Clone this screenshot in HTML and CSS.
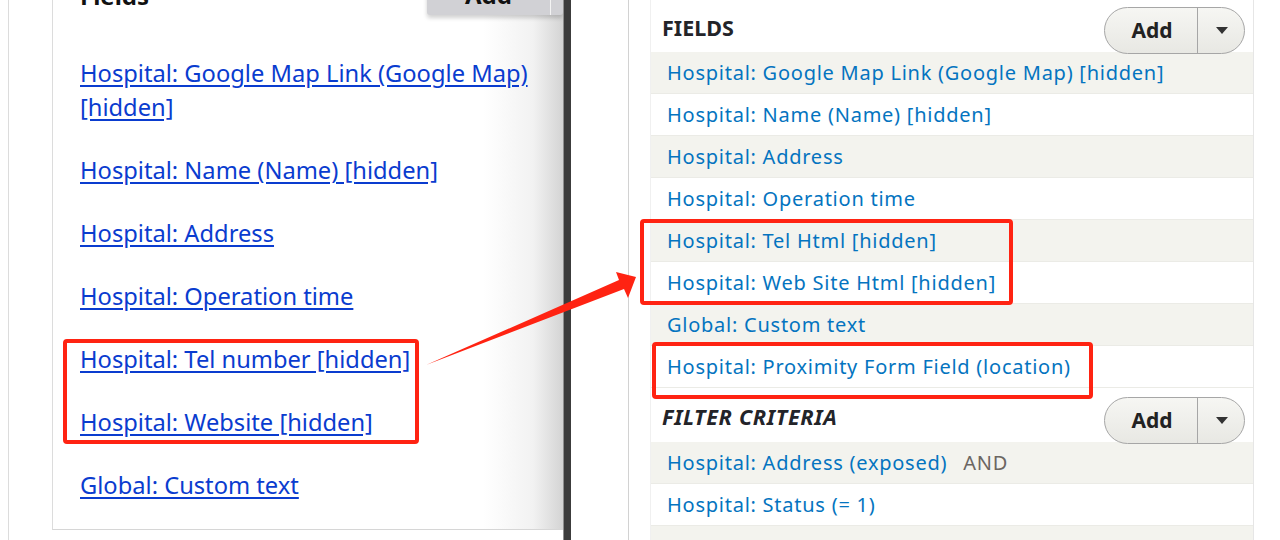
FILE: index.html
```html
<!DOCTYPE html>
<html>
<head>
<meta charset="utf-8">
<link rel="stylesheet" href="styles.css">
</head>
<body>
<div class="page">
  <div class="shot-left">
    <div class="outer">
      <div class="card">
        <div class="card-head">
          <span class="card-title">Fields</span>
          <span class="grey-btn"><span class="grey-btn-label">Add</span><span class="grey-btn-toggle"></span></span>
        </div>
        <ul class="link-list">
          <li><a href="#">Hospital: Google Map Link (Google Map) [hidden]</a></li>
          <li><a href="#">Hospital: Name (Name) [hidden]</a></li>
          <li><a href="#">Hospital: Address</a></li>
          <li><a href="#">Hospital: Operation time</a></li>
          <li><a href="#">Hospital: Tel number [hidden]</a></li>
          <li><a href="#">Hospital: Website [hidden]</a></li>
          <li><a href="#">Global: Custom text</a></li>
        </ul>
      </div>
    </div>
  </div>
  <div class="splitter"></div>
  <div class="shot-right">
    <div class="gutter"></div>
    <div class="panel">
      <div class="section-head">
        <h2 class="section-title">FIELDS</h2>
        <div class="drop-btn"><span class="drop-main">Add</span><span class="drop-toggle"><span class="caret"></span></span></div>
      </div>
      <div class="rows">
        <div class="row"><a href="#">Hospital: Google Map Link (Google Map) [hidden]</a></div>
        <div class="row"><a href="#">Hospital: Name (Name) [hidden]</a></div>
        <div class="row"><a href="#">Hospital: Address</a></div>
        <div class="row"><a href="#">Hospital: Operation time</a></div>
        <div class="row"><a href="#">Hospital: Tel Html [hidden]</a></div>
        <div class="row"><a href="#">Hospital: Web Site Html [hidden]</a></div>
        <div class="row"><a href="#">Global: Custom text</a></div>
        <div class="row"><a href="#">Hospital: Proximity Form Field (location)</a></div>
      </div>
      <div class="section-head filter-head">
        <h2 class="section-title italic">FILTER CRITERIA</h2>
        <div class="drop-btn"><span class="drop-main">Add</span><span class="drop-toggle"><span class="caret"></span></span></div>
      </div>
      <div class="rows">
        <div class="row"><a href="#">Hospital: Address (exposed)</a><span class="op">AND</span></div>
        <div class="row"><a href="#">Hospital: Status (= 1)</a></div>
        <div class="row"><span class="op first">AND</span></div>
      </div>
    </div>
  </div>
</div>

<div class="mark mark-left"></div>
<div class="mark mark-right-a"></div>
<div class="mark mark-right-b"></div>
<svg class="arrow" width="1280" height="540" viewBox="0 0 1280 540" xmlns="http://www.w3.org/2000/svg">
  <polygon points="426,365 619,280 616,272 636,277 628,298 624,289" fill="#ff2312"/>
</svg>
</body>
</html>
```
FILE: styles.css
```css
html, body {
  margin: 0;
  padding: 0;
  background: #fff;
  height: 540px;
  overflow: hidden;
}
body {
  position: relative;
  font-family: "Noto Sans", "Liberation Sans", sans-serif;
}
.page {
  display: flex;
  height: 540px;
}

/* left screenshot */
.shot-left {
  width: 555px;
  padding-left: 8px;
  flex: none;
}
.outer {
  display: flow-root;
  border-left: 1px solid #dcdcdc;
  height: 100%;
  padding-left: 43px;
}
.card {
  margin-top: -30px;
  border-left: 1px solid #dcdcdc;
  border-bottom: 1px solid #d6d6d6;
  height: 560px;
  background: linear-gradient(to right, #ffffff 0, #ffffff 430px, #f2f2f2 480px, #d3d3d3 511px);
  padding-left: 27px;
  box-sizing: border-box;
}
.card-head {
  height: 45px;
  display: flex;
  align-items: flex-end;
  justify-content: space-between;
}
.card-title {
  font-weight: bold;
  font-size: 24px;
  line-height: 30px;
  color: #111;
  margin-bottom: 4px;
}
.grey-btn {
  display: flex;
  width: 136px;
  height: 45px;
  background: #d1d1d5;
  border-radius: 0 0 3px 3px;
  box-shadow: 0 3px 4px rgba(0,0,0,0.18);
}
.grey-btn-label {
  width: 124px;
  font-weight: bold;
  font-size: 24px;
  line-height: 30px;
  text-align: center;
  color: #111;
  padding-top: 10px;
  border-right: 1px solid #f4f4f4;
  box-sizing: border-box;
}
.link-list {
  list-style: none;
  margin: 0;
  padding: 41px 30px 0 0;
  display: flex;
  flex-direction: column;
  gap: 29px;
  font-size: 23.7px;
  line-height: 34px;
}
.link-list a {
  color: #0a3ccf;
  text-decoration: underline;
  text-underline-offset: 3px;
}

/* splitter */
.splitter {
  width: 8px;
  flex: none;
  background: #3c3c3c;
  border-left: 1px solid #8f8f8f;
  box-sizing: border-box;
}

/* right screenshot */
.shot-right {
  flex: 1;
  display: flex;
  background: #fff;
}
.gutter {
  width: 57px;
  border-right: 1px solid #d2d2d2;
  flex: none;
  margin-right: 21px;
}
.panel {
  width: 602px;
  border-right: 1px solid #e6e6e6;
  border-left: 1px solid #f0f0f0;
  flex: none;
}
.section-head {
  height: 52px;
  display: flex;
  align-items: flex-start;
  justify-content: space-between;
  padding: 0 8px 0 11px;
}
.filter-head {
  height: 54px;
}
.section-title {
  margin: 16px 0 0 0;
  font-size: 21.5px;
  line-height: 24px;
  font-weight: bold;
  color: #232429;
}
.italic {
  font-style: italic;
  margin-top: 17px;
  letter-spacing: 0.7px;
}
.drop-btn {
  margin-top: 7px;
  display: flex;
  height: 47px;
  width: 141px;
  border: 1px solid #a6a6a6;
  border-radius: 24px;
  background: linear-gradient(#f6f6f3, #e8e8e3);
  box-sizing: border-box;
  position: relative;
  z-index: 1;
}
.filter-head .drop-btn {
  margin-top: 9px;
}
.drop-main {
  width: 93px;
  border-right: 1px solid #a6a6a6;
  font-weight: bold;
  font-size: 21px;
  line-height: 45px;
  text-align: center;
  color: #222;
  padding-left: 2px;
  box-sizing: border-box;
}
.drop-toggle {
  flex: 1;
  display: flex;
  align-items: center;
  justify-content: center;
}
.caret {
  width: 0;
  height: 0;
  border-left: 6px solid transparent;
  border-right: 6px solid transparent;
  border-top: 7px solid #333;
  margin-left: 2px;
}
.rows .row {
  height: 42px;
  box-sizing: border-box;
  padding-left: 16px;
  font-size: 20px;
  letter-spacing: 0.75px;
  line-height: 41px;
  border-bottom: 1px solid #ebebe6;
  white-space: nowrap;
}
.rows .row:nth-child(odd) {
  background: #f3f3ee;
}
.rows .row a {
  color: #0474c0;
  text-decoration: none;
}
.op {
  color: #6b6662;
  margin-left: 16px;
}
.op.first {
  margin-left: 0;
}

/* annotations */
.mark {
  position: absolute;
  border: 4px solid #ff2312;
  border-radius: 4px;
  box-sizing: border-box;
}
.mark-left {
  left: 63px;
  top: 339px;
  width: 356px;
  height: 105px;
}
.mark-right-a {
  left: 640px;
  top: 219px;
  width: 373px;
  height: 86px;
}
.mark-right-b {
  left: 652px;
  top: 342px;
  width: 441px;
  height: 57px;
}
.arrow {
  position: absolute;
  left: 0;
  top: 0;
}
```
